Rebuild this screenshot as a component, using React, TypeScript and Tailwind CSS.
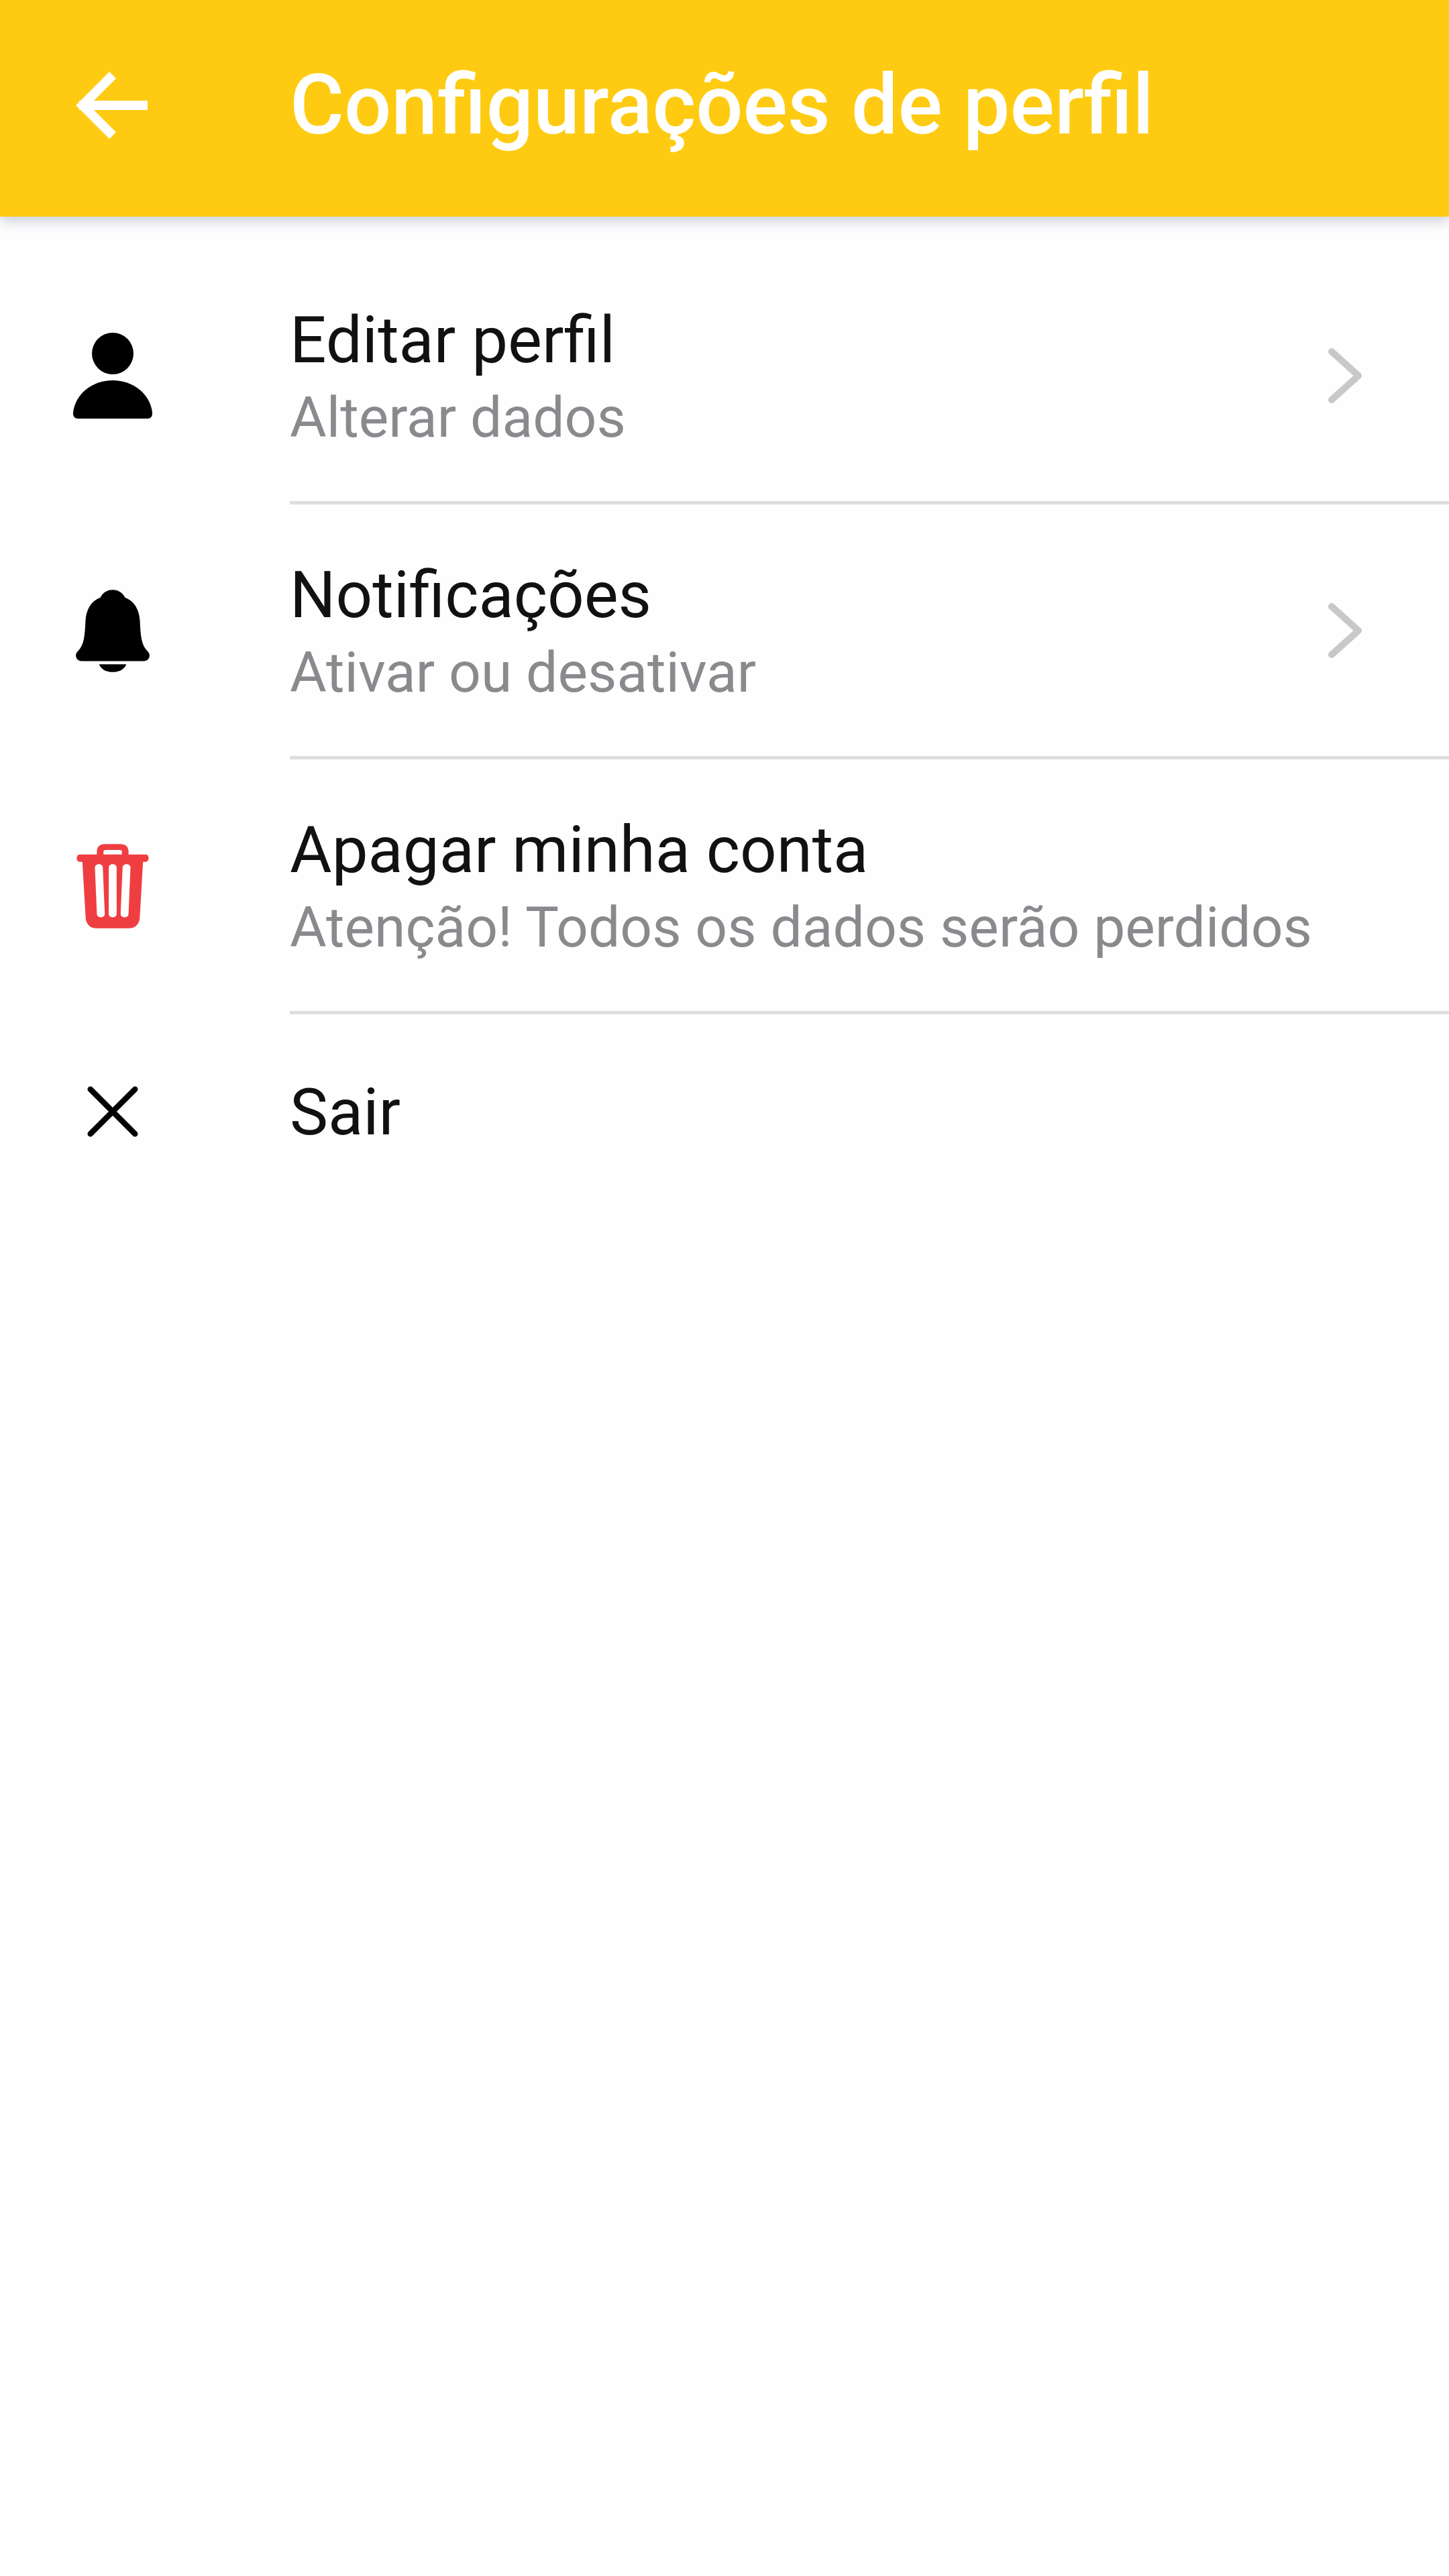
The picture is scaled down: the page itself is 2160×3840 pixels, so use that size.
function ChevronIcon() {
  return (
    <svg viewBox="0 0 56 84" className="h-[84px] w-[56px] shrink-0" fill="none" stroke="#c8c8c8" strokeWidth="10" strokeLinecap="round" strokeLinejoin="round">
      <path d="M7 6 L47 42 L7 78" />
    </svg>
  );
}

function PersonIcon() {
  return (
    <svg viewBox="0 0 120 130" className="h-[130px] w-[120px]" fill="#000">
      <circle cx="60" cy="32" r="31" />
      <path d="M1 120 C4 92 30 72 60 72 C90 72 116 92 119 120 C119.500 125 117 129 112 129 L8 129 C3 129 0.500 125 1 120 Z" />
    </svg>
  );
}

function BellIcon() {
  return (
    <svg viewBox="0 0 116 130" className="h-[130px] w-[112px]" fill="#000">
      <path d="M58 2 C67 2 74 7 77 14 C91 19 99 32 100 50 C101 72 102 88 112 97 C118 103 114 112 106 112 L10 112 C2 112 -2 103 4 97 C14 88 15 72 16 50 C17 32 25 19 39 14 C42 7 49 2 58 2 Z" />
      <path d="M37 117 L79 117 C76 125 68 129 58 129 C48 129 40 125 37 117 Z" />
    </svg>
  );
}

function TrashIcon() {
  return (
    <svg viewBox="0 0 112 130" className="h-[130px] w-[110px]" fill="#ef3e42" fillRule="evenodd">
      <path d="M32 18 L32 13 C32 6 37 2 44 2 L68 2 C75 2 80 6 80 13 L80 18 L106 18 C112 18 112 29 106 29 L102 29 L97 115 C96 124 90 130 81 130 L31 130 C22 130 16 124 15 115 L10 29 L6 29 C0 29 0 18 6 18 Z M42 18 L70 18 L70 14 C70 12 69 11 67 11 L45 11 C43 11 42 12 42 14 Z M29 38 L32 108 C32 115 44 115 44 108 L41 38 C41 31 29 31 29 38 Z M50 38 L50 108 C50 115 62 115 62 108 L62 38 C62 31 50 31 50 38 Z M71 38 L68 108 C68 115 80 115 80 108 L83 38 C83 31 71 31 71 38 Z" />
    </svg>
  );
}

function CloseIcon() {
  return (
    <svg viewBox="0 0 80 80" className="h-[76px] w-[76px]" fill="none" stroke="#000" strokeWidth="9" strokeLinecap="round">
      <path d="M5 5 L75 75 M75 5 L5 75" />
    </svg>
  );
}

function BackIcon() {
  return (
    <svg viewBox="0 0 110 100" className="h-[100px] w-[110px]" fill="none" stroke="#fff" strokeWidth="14" strokeLinecap="square" strokeLinejoin="miter">
      <path d="M50 10 L10 50 L50 90 M12 50 L100 50" />
    </svg>
  );
}

const rows = [
  { title: 'Editar perfil', sub: 'Alterar dados', icon: <PersonIcon />, chevron: true },
  { title: 'Notificações', sub: 'Ativar ou desativar', icon: <BellIcon />, chevron: true },
  { title: 'Apagar minha conta', sub: 'Atenção! Todos os dados serão perdidos', icon: <TrashIcon />, chevron: false },
];

export default function App() {
  return (
    <div className="flex h-[3840px] w-[2160px] flex-col bg-[#fefefe] font-['Roboto',sans-serif]">
      <header className="flex h-[323px] shrink-0 items-center bg-[#fecb12] pb-[10px] shadow-[0_6px_18px_rgba(120,125,160,0.4)]">
        <div className="flex w-[432px] shrink-0 justify-center pr-[96px]">
          <BackIcon />
        </div>
        <h1 className="text-[124px] leading-none font-medium text-white">Configurações de perfil</h1>
      </header>
      <main className="flex flex-col pt-[49px]">
        {rows.map((row) => (
          <div key={row.title} className="flex h-[380px] items-center">
            <div className="flex w-[432px] shrink-0 justify-center pr-[96px] pb-[4px]">{row.icon}</div>
            <div className="flex h-full flex-1 items-center border-b-[5px] border-[#dedede] pr-[126px]">
              <div className="flex flex-1 flex-col pt-[10px]">
                <span className="text-[96px] leading-[116px] text-[#111]">{row.title}</span>
                <span className="text-[84px] leading-[116px] text-[#8a8a8e]">{row.sub}</span>
              </div>
              {row.chevron && <ChevronIcon />}
            </div>
          </div>
        ))}
        <div className="flex h-[292px] items-center">
          <div className="flex w-[432px] shrink-0 justify-center pr-[96px] pb-[2px]">
            <CloseIcon />
          </div>
          <span className="text-[96px] text-[#111]">Sair</span>
        </div>
      </main>
    </div>
  );
}
